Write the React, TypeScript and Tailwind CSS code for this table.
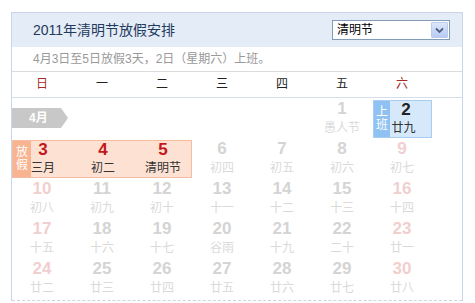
import React from "react"

type Day = { d: number; l: string; weekend?: boolean }

const weekdays = ["日", "一", "二", "三", "四", "五", "六"]

const rows: Day[][] = [
  [
    { d: 6, l: "初四" },
    { d: 7, l: "初五" },
    { d: 8, l: "初六" },
    { d: 9, l: "初七", weekend: true },
  ],
  [
    { d: 10, l: "初八", weekend: true },
    { d: 11, l: "初九" },
    { d: 12, l: "初十" },
    { d: 13, l: "十一" },
    { d: 14, l: "十二" },
    { d: 15, l: "十三" },
    { d: 16, l: "十四", weekend: true },
  ],
  [
    { d: 17, l: "十五", weekend: true },
    { d: 18, l: "十六" },
    { d: 19, l: "十七" },
    { d: 20, l: "谷雨" },
    { d: 21, l: "十九" },
    { d: 22, l: "二十" },
    { d: 23, l: "廿一", weekend: true },
  ],
  [
    { d: 24, l: "廿二", weekend: true },
    { d: 25, l: "廿三" },
    { d: 26, l: "廿四" },
    { d: 27, l: "廿五" },
    { d: 28, l: "廿六" },
    { d: 29, l: "廿七" },
    { d: 30, l: "廿八", weekend: true },
  ],
]

const holiday: Day[] = [
  { d: 3, l: "三月" },
  { d: 4, l: "初二" },
  { d: 5, l: "清明节" },
]

function DayCell({ day }: { day: Day }) {
  return (
    <div className="flex h-[40px] flex-col items-center">
      <span
        className={`text-[17px] font-bold leading-[18px] ${
          day.weekend ? "text-[#f2cfcf]" : "text-[#d4d4d4]"
        }`}
      >
        {day.d}
      </span>
      <span className="mt-[3px] text-[12px] leading-[14px] text-[#dadada]">{day.l}</span>
    </div>
  )
}

function Tag({ text, className }: { text: string; className: string }) {
  return (
    <div
      className={`absolute left-0 top-0 flex h-full flex-col items-center justify-center text-[12px] leading-[13px] text-white ${className}`}
    >
      {text.split("").map((c) => (
        <span key={c}>{c}</span>
      ))}
    </div>
  )
}

function SelectBox() {
  return (
    <div className="flex h-[20px] w-[118px] items-center justify-between border border-[#7f9db9] bg-white pl-[4px] pr-[1px]">
      <span className="text-[12px] leading-none text-black">清明节</span>
      <div className="flex h-[16px] w-[17px] items-center justify-center rounded-[1px] border border-[#bccbea] bg-gradient-to-b from-[#dce6fb] to-[#b8cbf5]">
        <svg width="9" height="7" viewBox="0 0 9 7">
          <path d="M1 1.5 L4.5 5 L8 1.5" fill="none" stroke="#4d6185" strokeWidth="1.8" />
        </svg>
      </div>
    </div>
  )
}

export default function App() {
  return (
    <div className="h-[303px] w-[475px] overflow-hidden bg-white pl-[11px] pt-[12px] font-['Liberation_Sans','Noto_Sans_CJK_SC',sans-serif]">
      <div className="w-[452px] border border-b-0 border-[#c8d6e8]">
        {/* Title bar */}
        <div className="flex h-[34px] items-center justify-between bg-[#e4ecf7] pl-[21px] pr-[12px]">
          <h1 className="text-[14px] leading-none text-[#1f3a5c]">2011年清明节放假安排</h1>
          <SelectBox />
        </div>

        <div className="flex h-[25px] items-center border-b border-[#dcdcdc] pl-[21px] text-[12px] text-[#999]">
          4月3日至5日放假3天，2日（星期六）上班。
        </div>

        {/* Weekday header */}
        <div className="grid h-[26px] grid-cols-[repeat(7,60px)] border-b border-[#d6dee9] pb-[2px] text-[12px]">
          {weekdays.map((w, i) => (
            <div
              key={w}
              className={`flex items-center justify-center ${
                i === 0 || i === 6 ? "text-[#a52a2a]" : "text-[#222]"
              }`}
            >
              {w}
            </div>
          ))}
        </div>

        <div className="border-b border-dashed border-[#cdd7e4] pt-[2px]">
          <div className="grid grid-cols-[repeat(7,60px)]">
            {/* Week 1 */}
            <div className="col-span-5 h-[40px] pt-[8px]">
              <div className="flex h-[20px] w-[56px] items-center bg-[#c8c8c8] pl-[17px] text-[12px] font-bold text-white [clip-path:polygon(0_0,49px_0,56px_50%,49px_100%,0_100%)]">
                4月
              </div>
            </div>
            <div className="flex h-[40px] flex-col items-center">
              <span className="text-[17px] font-bold leading-[18px] text-[#d4d4d4]">1</span>
              <span className="mt-[3px] text-[12px] leading-[14px] text-[#dadada]">愚人节</span>
            </div>
            <div className="h-[40px] pl-[1px]">
              <div className="relative flex h-[38px] flex-col items-center border border-[#a8cdf0] bg-[#d6e9fb] pl-[2px]">
                <Tag text="上班" className="w-[16px] bg-[#8fc2f2]" />
                <span className="pl-[5px] text-[17px] font-bold leading-[18px] text-[#222]">2</span>
                <span className="mt-[2px] text-[12px] leading-[14px] text-[#333]">廿九</span>
              </div>
            </div>

            {/* Week 2: holiday block */}
            <div className="col-span-3 h-[40px]">
              <div className="relative grid h-[38px] grid-cols-[repeat(3,60px)] border border-[#f3bca3] bg-[#fde2d3]">
                <Tag text="放假" className="w-[18px] bg-[#f8b391]" />
                {holiday.map((h) => (
                  <div key={h.d} className="flex flex-col items-center">
                    <span className="text-[17px] font-bold leading-[18px] text-[#c3171a]">{h.d}</span>
                    <span className="mt-[2px] text-[12px] leading-[14px] text-[#333]">{h.l}</span>
                  </div>
                ))}
              </div>
            </div>
            {rows[0].map((d) => (
              <DayCell key={d.d} day={d} />
            ))}

            {rows.slice(1).map((r) => r.map((d) => <DayCell key={d.d} day={d} />))}
          </div>
        </div>
      </div>
    </div>
  )
}
